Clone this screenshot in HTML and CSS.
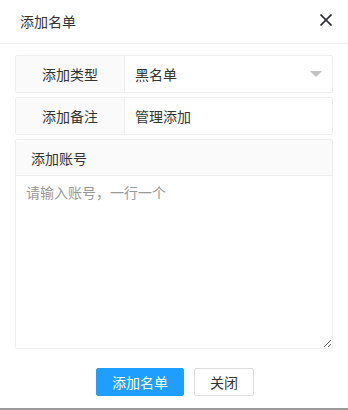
FILE: index.html
```html
<!DOCTYPE html>
<html lang="zh-CN">
  <head>
    <meta charset="UTF-8" />
    <meta name="viewport" content="width=device-width, initial-scale=1.0" />
    <title>添加名单</title>
    <link rel="stylesheet" href="styles.css">
  </head>
  <body>
    <div class="layer">
      <div class="layer-title">
        <span>添加名单</span>
        <svg class="layer-close" width="12" height="12" viewBox="0 0 12 12">
          <path d="M0.5 0.5 L11.5 11.5 M11.5 0.5 L0.5 11.5" stroke="#2f2f3a" stroke-width="1.6" fill="none" />
        </svg>
      </div>

      <form class="layer-content">
        <div class="form-item">
          <label class="form-label">添加类型</label>
          <div class="form-block select">
            <span>黑名单</span>
            <i class="edge"></i>
          </div>
        </div>

        <div class="form-item">
          <label class="form-label">添加备注</label>
          <div class="form-block">
            <input class="form-input" type="text" value="管理添加" />
          </div>
        </div>

        <div class="form-item form-text">
          <label class="form-text-label">添加账号</label>
          <textarea class="form-textarea" placeholder="请输入账号，一行一个"></textarea>
        </div>
      </form>

      <div class="layer-btns">
        <button class="btn btn-primary" type="button">添加名单</button>
        <button class="btn" type="button">关闭</button>
      </div>
    </div>
  </body>
</html>
```

FILE: styles.css
```css
* {
  margin: 0;
  padding: 0;
  box-sizing: border-box;
}

body {
  font-family: "Noto Sans CJK SC", "Noto Sans", sans-serif;
  font-size: 14px;
  color: #333;
  background: #fff;
}

.layer {
  height: 410px;
  border-bottom: 2px solid #9a9a9a;
  background: #fff;
}

.layer-title {
  height: 44px;
  padding: 0 16px 0 20px;
  border-bottom: 1px solid #eee;
  display: flex;
  align-items: center;
  justify-content: space-between;
  color: #333;
}

.layer-title span {
  margin-top: -2px;
}

.layer-close {
  display: block;
  margin-top: -4px;
}

.layer-content {
  padding: 11px 15px 0 15px;
}

.form-item {
  display: flex;
  margin-bottom: 4px;
  border: 1px solid #eee;
  border-radius: 2px;
}

.form-label {
  width: 109px;
  height: 36px;
  line-height: 36px;
  text-align: center;
  background: #fafafa;
  border-right: 1px solid #eee;
}

.form-block {
  flex: 1;
  height: 36px;
  display: flex;
  align-items: center;
  padding-left: 10px;
}

.select {
  justify-content: space-between;
  padding-right: 10px;
}

.select .edge {
  width: 0;
  height: 0;
  border-style: solid;
  border-width: 6px 6px 0 6px;
  border-color: #c2c2c2 transparent transparent transparent;
}

.form-input {
  width: 100%;
  height: 34px;
  border: none;
  outline: none;
  font: inherit;
  color: #333;
  background: transparent;
}

.form-text {
  flex-direction: column;
}

.form-text-label {
  display: block;
  height: 36px;
  line-height: 36px;
  padding-left: 15px;
  background: #fafafa;
  border-bottom: 1px solid #eee;
}

.form-textarea {
  display: block;
  width: 100%;
  height: 172px;
  border: none;
  outline: none;
  resize: vertical;
  padding: 6px 10px;
  font: inherit;
  line-height: 20px;
  color: #333;
}

.form-textarea::placeholder {
  color: #999;
}

.layer-btns {
  display: flex;
  justify-content: center;
  gap: 10px;
  padding-top: 15px;
  padding-left: 2px;
}

.btn {
  height: 28px;
  line-height: 26px;
  padding: 0 15px;
  border: 1px solid #dedede;
  border-radius: 2px;
  background: #fff;
  color: #333;
  font: inherit;
  cursor: pointer;
}

.btn-primary {
  border-color: #1e9fff;
  background: #1e9fff;
  color: #fff;
}
```
